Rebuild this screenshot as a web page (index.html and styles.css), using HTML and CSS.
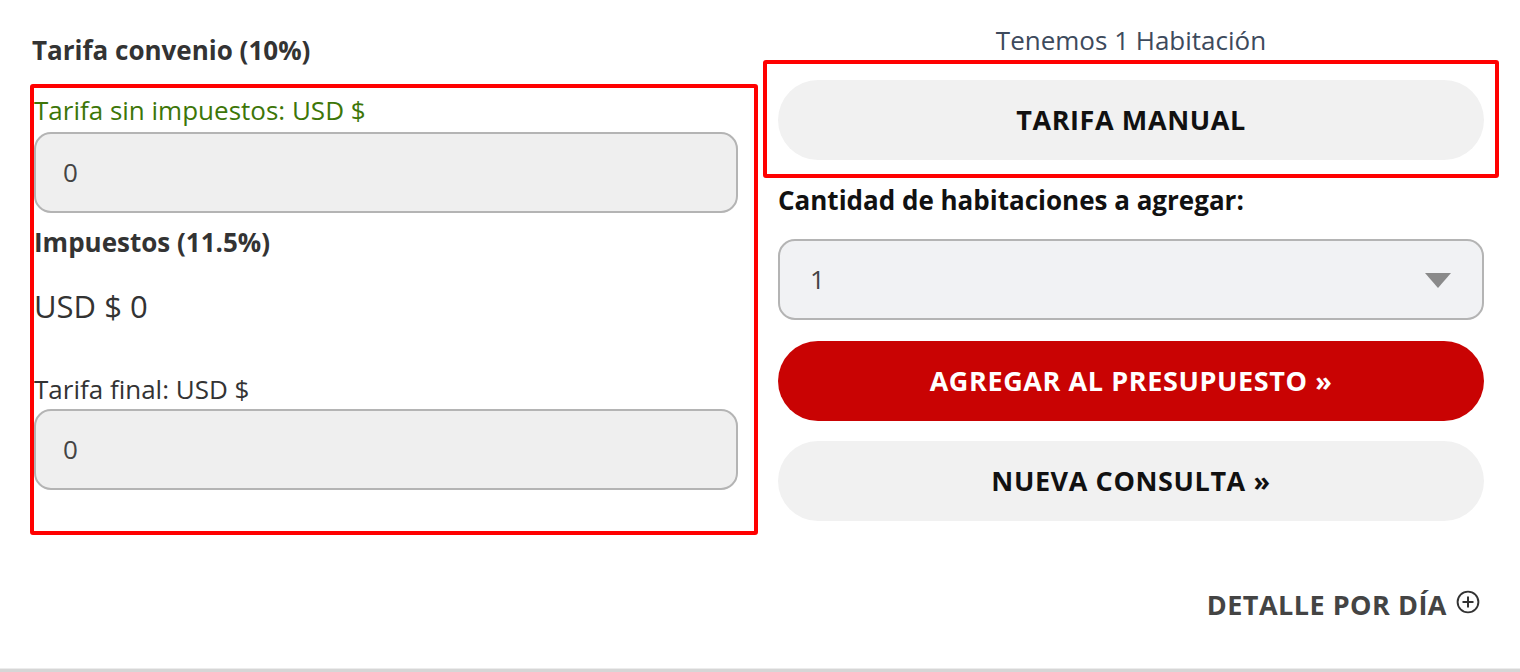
FILE: index.html
```html
<!DOCTYPE html>
<html lang="es">
<head>
<meta charset="utf-8">
<title>Tarifa</title>
<link rel="stylesheet" href="styles.css">
</head>
<body>
<div class="page">
  <div class="cols">
    <div class="col-left">
      <div class="title">Tarifa convenio (10%)</div>
      <div class="hl-box hl-left">
        <div class="label green">Tarifa sin impuestos: USD $</div>
        <div class="field">0</div>
        <div class="label bold mt-imp">Impuestos (11.5%)</div>
        <div class="amount">USD $ 0</div>
        <div class="label mt-final">Tarifa final: USD $</div>
        <div class="field field-final">0</div>
      </div>
    </div>
    <div class="col-right">
      <div class="avail">Tenemos 1 Habitación</div>
      <div class="hl-box hl-right">
        <div class="btn btn-light">TARIFA MANUAL</div>
      </div>
      <div class="label bold black mt-qty">Cantidad de habitaciones a agregar:</div>
      <div class="select">
        <span>1</span>
        <span class="caret"></span>
      </div>
      <div class="btn btn-red">AGREGAR AL PRESUPUESTO »</div>
      <div class="btn btn-light mt-btn">NUEVA CONSULTA »</div>
      <div class="detail">
        <span>DETALLE POR DÍA</span>
        <svg class="plus" width="24" height="24" viewBox="0 0 24 24"><circle cx="12" cy="12" r="10.4" fill="none" stroke="#333" stroke-width="1.9"/><path d="M12 6.5v11M6.5 12h11" stroke="#333" stroke-width="2" fill="none"/></svg>
      </div>
    </div>
  </div>
  <div class="bottom-line"></div>
</div>
</body>
</html>
```
FILE: styles.css
```css
* { box-sizing: border-box; }
html, body { margin: 0; padding: 0; background: #fff; }
body {
  font-family: "Open Sans", "Liberation Sans", sans-serif;
  font-size: 26px;
  line-height: 1.4;
  color: #333;
  width: 1520px;
  height: 672px;
  overflow: hidden;
}
.page { padding-top: 22px; }
.cols {
  display: flex;
  padding-left: 34px;
  gap: 40px;
}
.col-left { width: 704px; padding-top: 10px; }
.col-right { width: 706px; }

.title { font-weight: 700; color: #333; margin-left: -2px; }

.hl-box {
  border: 4px solid #ff0000;
  border-radius: 3px;
}
.hl-left {
  margin: 16px -20px 0 -4px;
  padding: 4px 16px 41px 0;
}
.hl-right {
  margin: 2px -15px 0 -15px;
  padding: 16px 11px 14px 11px;
}

.label { color: #333; }
.green { color: #3d7608; }
.bold { font-weight: 700; }
.black { color: #111; }

.field {
  margin-top: 3px;
  height: 81px;
  border: 2px solid #b4b4b4;
  border-radius: 17px;
  background: #efefef;
  padding-left: 27px;
  display: flex;
  align-items: center;
  color: #444;
}
.field-final { margin-top: 2px; }
.mt-imp { margin-top: 11px; }
.amount {
  font-size: 31px;
  margin-top: 25px;
  color: #333;
}
.mt-final { margin-top: 42px; }

.avail {
  text-align: center;
  color: #3d4a5c;
}

.btn {
  height: 80px;
  border-radius: 40px;
  display: flex;
  align-items: center;
  justify-content: center;
  font-weight: 700;
  font-size: 27px;
  letter-spacing: 0.6px;
}
.btn-light { background: #f1f1f1; color: #111; }
.btn-red { background: #c90303; color: #fff; margin-top: 21px; }
.mt-btn { margin-top: 20px; }
.mt-qty { margin-top: 4px; }

.select {
  margin-top: 20px;
  height: 81px;
  border: 2px solid #b4b4b4;
  border-radius: 17px;
  background: #f1f2f4;
  padding: 0 31px 0 30px;
  display: flex;
  align-items: center;
  justify-content: space-between;
  color: #444;
}
.caret {
  width: 0;
  height: 0;
  border-left: 13px solid transparent;
  border-right: 13px solid transparent;
  border-top: 15px solid #8a8a8a;
  margin-top: 2px;
}

.detail {
  margin-top: 65px;
  display: flex;
  justify-content: flex-end;
  align-items: center;
  gap: 9px;
  padding-right: 4px;
  font-weight: 700;
  font-size: 27px;
  color: #444;
  letter-spacing: 0.5px;
}
.plus { display: block; margin-top: -6px; }

.bottom-line {
  margin-top: 44px;
  height: 4px;
  border-top: 1px solid #ececec;
  background: #d6d6d6;
}
```
